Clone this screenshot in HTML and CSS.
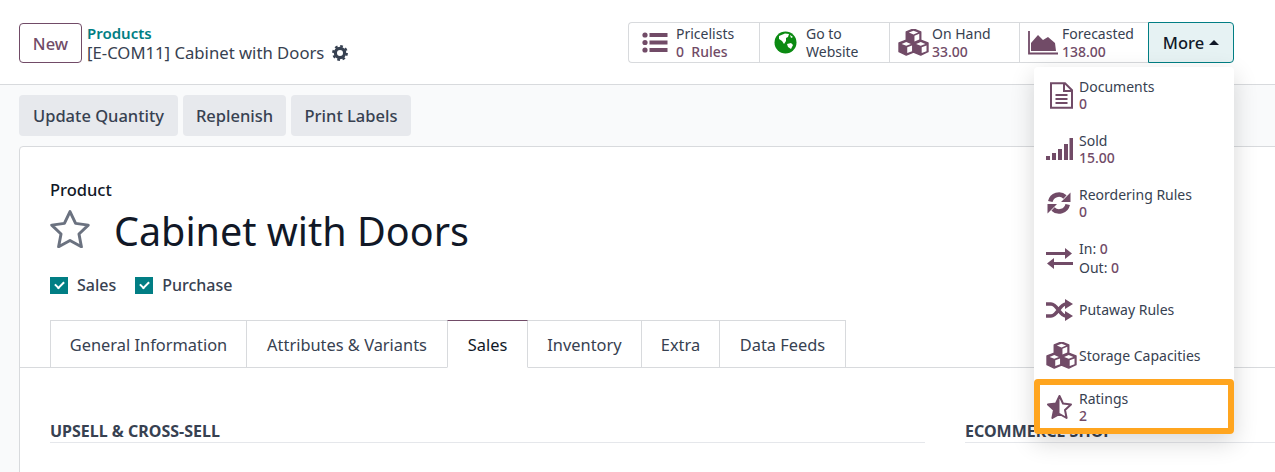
FILE: index.html
```html
<!DOCTYPE html>
<html lang="en">
<head>
    <meta charset="UTF-8">
    <title>Cabinet with Doors</title>
    <link rel="stylesheet" href="styles.css">
</head>
<body>
    <svg class="defs" width="0" height="0">
        <symbol id="cubes" viewBox="0 0 34 28">
            <path d="M17 0l7.500 3v8.500l7.500 3v9L24.500 27 17 24l-7.500 3L2 23.500v-9l7.500-3V3z" fill="#714b67" stroke="#714b67" stroke-width="1.500" stroke-linejoin="round"/>
            <path d="M17 1.800l4.800 1.900L17 5.600l-4.800-1.900zM9.500 13.600l4.800 1.900-4.800 1.900-4.800-1.900zM24.500 13.600l4.800 1.900-4.800 1.900-4.800-1.900z" fill="#fff"/>
            <path d="M18 7l5-2v6l-5 2zM10.500 19l5-2v6l-5 2zM25.500 19l5-2v6l-5 2z" fill="#fff"/>
        </symbol>
    </svg>

    <header class="control-panel">
        <button class="btn-new">New</button>
        <div class="breadcrumb">
            <a class="breadcrumb-link">Products</a>
            <div class="breadcrumb-current">
                <span>[E-COM11] Cabinet with Doors</span>
                <svg class="icon-gear" viewBox="0 0 16 16">
                    <circle cx="8" cy="8" r="4.600" fill="none" stroke="#374151" stroke-width="3.200"/>
                    <circle cx="8" cy="8" r="6.800" fill="none" stroke="#374151" stroke-width="2.200" stroke-dasharray="2.700 2.640"/>
                </svg>
            </div>
        </div>
        <div class="stat-buttons">
            <div class="stat-group">
                <a class="stat stat-pricelists">
                    <svg class="stat-icon" width="26" height="21" viewBox="0 0 26 21">
                        <circle cx="3" cy="3" r="2.600"/><circle cx="3" cy="10.500" r="2.600"/><circle cx="3" cy="18" r="2.600"/>
                        <rect x="7.500" y="1" width="18" height="4"/><rect x="7.500" y="8.500" width="18" height="4"/><rect x="7.500" y="16" width="18" height="4"/>
                    </svg>
                    <span class="stat-text"><span>Pricelists</span><span class="stat-value">0&nbsp; Rules</span></span>
                </a>
                <a class="stat stat-website">
                    <svg class="stat-icon" width="23" height="23" viewBox="0 0 23 23">
                        <circle cx="11.500" cy="11.500" r="11" fill="#0b8a12"/>
                        <path d="M5 5l6-2.500 4 .5-1 3-2 1 0 3-2 3-2-3-3-2zM13 13l4-1 2 2-2 4-3-2zM16 4l3 2-2 1z" fill="#fff"/>
                    </svg>
                    <span class="stat-text"><span>Go to</span><span>Website</span></span>
                </a>
                <a class="stat stat-hand">
                    <svg class="stat-icon" width="33" height="27"><use href="#cubes"/></svg>
                    <span class="stat-text"><span>On Hand</span><span class="stat-value">33.00</span></span>
                </a>
                <a class="stat stat-forecast">
                    <svg class="stat-icon" width="30" height="24" viewBox="0 0 30 24">
                        <path d="M3 17L3 12 10 4l5 5 5-3 7 6 1 8H3z"/>
                        <path d="M1 0v22.500h29" fill="none" stroke="#714b67" stroke-width="1.800"/>
                    </svg>
                    <span class="stat-text"><span>Forecasted</span><span class="stat-value">138.00</span></span>
                </a>
            </div>
            <div class="more-wrap">
                <button class="btn-more">More <span class="caret"></span></button>
                <div class="more-menu">
                    <a class="menu-item">
                        <svg class="stat-icon icon-doc" width="25" height="27" viewBox="0 0 25 27">
                            <path d="M2 1.200h14l7 7v17.600H2z" fill="none" stroke="#714b67" stroke-width="2"/>
                            <path d="M15 1.500v7.500h8M6.500 13h12M6.500 17h12M6.500 21h12" fill="none" stroke="#714b67" stroke-width="2"/>
                        </svg>
                        <span class="stat-text"><span>Documents</span><span class="stat-value">0</span></span>
                    </a>
                    <a class="menu-item">
                        <svg class="stat-icon" width="27" height="23" viewBox="0 0 27 23">
                            <rect x="0" y="18" width="4" height="4"/><rect x="6" y="15" width="4" height="7"/><rect x="12" y="11" width="4" height="11"/><rect x="18" y="6" width="4" height="16"/><rect x="23.500" y="0" width="3.500" height="22"/>
                        </svg>
                        <span class="stat-text"><span>Sold</span><span class="stat-value">15.00</span></span>
                    </a>
                    <a class="menu-item">
                        <svg class="stat-icon icon-refresh" width="24" height="24" viewBox="0 0 24 24">
                            <path d="M3.300 10.500A8.800 8.800 0 0 1 18 6M20.700 13.500A8.800 8.800 0 0 1 6 18" fill="none" stroke="#714b67" stroke-width="4.600"/>
                            <path d="M23.500 1.500v9.500H14zM.5 22.500V13H10z"/>
                        </svg>
                        <span class="stat-text"><span>Reordering Rules</span><span class="stat-value">0</span></span>
                    </a>
                    <a class="menu-item menu-inout">
                        <svg class="stat-icon" width="27" height="21" viewBox="0 0 27 21">
                            <path d="M0 4h19V0l7 5.500-7 5.500V7H0zM27 14H8v-4l-7 5.500L8 21v-4h19z"/>
                        </svg>
                        <span class="stat-text"><span>In: <span class="stat-value">0</span></span><span>Out: <span class="stat-value">0</span></span></span>
                    </a>
                    <a class="menu-item menu-putaway">
                        <svg class="stat-icon" width="27" height="22" viewBox="0 0 27 22">
                            <path d="M0 5h5c6.500 0 8.500 12 15 12M0 17h5c6.500 0 8.500-12 15-12" fill="none" stroke="#714b67" stroke-width="3.600"/>
                            <path d="M19 0l8 5-8 5zM19 12l8 5-8 5z"/>
                        </svg>
                        <span class="stat-text"><span>Putaway Rules</span></span>
                    </a>
                    <a class="menu-item menu-storage">
                        <svg class="stat-icon icon-cubes" width="33" height="27"><use href="#cubes"/></svg>
                        <span class="stat-text"><span>Storage Capacities</span></span>
                    </a>
                    <a class="menu-item menu-highlight">
                        <svg class="stat-icon icon-rating" width="25" height="24" viewBox="0 0 25 24">
                            <path d="M12.500 1l3.500 7.500 8 1-6 5.500 1.600 8-7.100-4-7.100 4 1.600-8-6-5.500 8-1z" fill="none" stroke="#714b67" stroke-width="2" stroke-linejoin="round"/>
                            <path d="M12.500 1v17.500l-7.100 4 1.600-8-6-5.500 8-1z"/>
                        </svg>
                        <span class="stat-text"><span>Ratings</span><span class="stat-value">2</span></span>
                    </a>
                </div>
            </div>
        </div>
    </header>

    <main class="content">
        <div class="action-bar">
            <button class="btn-action btn-update">Update Quantity</button>
            <button class="btn-action btn-replenish">Replenish</button>
            <button class="btn-action btn-print">Print Labels</button>
        </div>
        <section class="sheet">
            <div class="sheet-head">
                <label class="field-label">Product</label>
                <div class="title-row">
                    <svg class="icon-star" width="40" height="38" viewBox="1.500 1 37 36">
                        <path d="M20 2.500l5.300 11.200 12 1.600-8.800 8.400 2.300 12.100L20 29.900 9.200 35.800l2.300-12.100-8.800-8.400 12-1.600z" fill="none" stroke="#6b7280" stroke-width="2.800" stroke-linejoin="round"/>
                    </svg>
                    <h1>Cabinet with Doors</h1>
                </div>
                <div class="checks">
                    <label class="check"><span class="check-box"></span>Sales</label>
                    <label class="check"><span class="check-box"></span>Purchase</label>
                </div>
            </div>
            <nav class="tabs">
                <a class="tab tab-general">General Information</a>
                <a class="tab tab-attrs">Attributes &amp; Variants</a>
                <a class="tab tab-sales active">Sales</a>
                <a class="tab tab-inventory">Inventory</a>
                <a class="tab tab-extra">Extra</a>
                <a class="tab tab-feeds">Data Feeds</a>
            </nav>
            <div class="sections">
                <h2 class="section-title">UPSELL &amp; CROSS-SELL</h2>
                <h2 class="section-title">ECOMMERCE SHOP</h2>
            </div>
        </section>
    </main>
</body>
</html>
```

FILE: styles.css
```css
:root {
    --plum: #714b67;
    --teal: #017e84;
    --text: #374151;
    --dark: #111827;
    --line: #d8dadd;
}

* {
    box-sizing: border-box;
    margin: 0;
    padding: 0;
    font-family: "Noto Sans", "Open Sans", sans-serif;
}

html, body {
    height: 472px;
    overflow: hidden;
}

body {
    background-color: #f9fafb;
    color: var(--text);
    font-size: 14px;
}

.defs {
    display: block;
    height: 0;
}

button {
    border: none;
    cursor: pointer;
}

.control-panel {
    display: flex;
    align-items: flex-start;
    height: 85px;
    padding: 22px 41px 0 19px;
    background: white;
    border-bottom: 1px solid var(--line);
}

.btn-new {
    width: 63px;
    height: 40px;
    margin-top: 1px;
    background: white;
    border: 1px solid var(--plum);
    border-radius: 4px;
    color: var(--plum);
    font-size: 16.500px;
    font-weight: 500;
}

.breadcrumb {
    margin-left: 5px;
    line-height: 20px;
}

.breadcrumb-link {
    display: block;
    margin-top: 1px;
    color: var(--teal);
    font-size: 15px;
    font-weight: 600;
}

.breadcrumb-current {
    display: flex;
    align-items: center;
    gap: 8px;
    font-size: 16.700px;
}

.icon-gear {
    width: 16px;
    height: 16px;
}

.stat-buttons {
    display: flex;
    margin-left: auto;
}

.stat-group {
    display: flex;
    height: 41px;
    border: 1px solid var(--line);
    border-right: none;
    border-radius: 4px 0 0 4px;
    background: white;
}

.stat {
    display: flex;
    align-items: center;
    border-right: 1px solid var(--line);
}

.stat-pricelists { width: 131px; padding-left: 13px; gap: 8px; }
.stat-website { width: 130px; padding-left: 14px; gap: 9px; }
.stat-hand { width: 130px; padding-left: 7px; gap: 2px; }
.stat-forecast { width: 128px; padding-left: 8px; gap: 4px; border-right: none; }

.stat-icon {
    flex-shrink: 0;
    fill: var(--plum);
}

.stat-text {
    display: flex;
    flex-direction: column;
    font-size: 14px;
    line-height: 18px;
}

.stat-value {
    color: var(--plum);
    font-weight: 500;
}

.more-wrap {
    position: relative;
}

.btn-more {
    display: flex;
    align-items: center;
    justify-content: center;
    gap: 5px;
    width: 86px;
    height: 41px;
    background: #e6f2f3;
    border: 1px solid var(--teal);
    border-radius: 0 4px 4px 0;
    color: var(--dark);
    font-size: 16.500px;
    font-weight: 500;
}

.caret {
    border-left: 5px solid transparent;
    border-right: 5px solid transparent;
    border-bottom: 5px solid var(--dark);
}

/* dropdown hangs over the page */
.more-menu {
    position: absolute;
    top: 45px;
    right: 0;
    width: 200px;
    height: 367px;
    padding-top: 1px;
    background: white;
    border-radius: 4px;
    box-shadow: 0 8px 24px rgba(0, 0, 0, 0.16);
    z-index: 2;
}

.menu-item {
    display: grid;
    grid-template-columns: 33px 1fr;
    align-items: center;
    height: 54px;
    padding-left: 12px;
}

.menu-item .stat-text {
    line-height: 17px;
}

.menu-inout {
    height: 56px;
}

.menu-inout .stat-text {
    line-height: 19px;
}

.menu-putaway {
    height: 47px;
}

.menu-storage {
    height: 45px;
}

.icon-doc {
    margin-left: 3px;
}

.icon-refresh {
    margin-left: 1px;
}

.icon-cubes {
    margin-left: -1px;
}

.icon-rating {
    margin-left: 1px;
}

.menu-highlight {
    position: absolute;
    left: 0;
    right: 0;
    bottom: 0;
    height: 55px;
    border: 6px solid #ffa51f;
    border-radius: 4px;
    padding-left: 6px;
}

.content {
    padding: 10px 0 0 19px;
}

.action-bar {
    display: flex;
    gap: 5px;
}

.btn-action {
    height: 41px;
    background: #e7e9ed;
    border-radius: 4px;
    color: var(--text);
    font-size: 16.500px;
    font-weight: 500;
}

.btn-update { width: 159px; }
.btn-replenish { width: 103px; }
.btn-print { width: 120px; }

.sheet {
    width: 1280px;
    height: 340px;
    margin-top: 10px;
    background: white;
    border: 1px solid var(--line);
    border-radius: 4px;
}

.sheet-head {
    padding: 32px 30px 0;
}

.field-label {
    display: block;
    color: var(--dark);
    font-size: 16.500px;
    font-weight: 500;
    line-height: 22px;
}

.title-row {
    display: flex;
    align-items: center;
    gap: 24px;
    height: 50px;
    margin-top: 4px;
}

.icon-star {
    margin-top: -2px;
}

h1 {
    margin-top: 2px;
    color: var(--dark);
    font-size: 39.500px;
    font-weight: 400;
}

.checks {
    display: flex;
    gap: 19px;
    margin-top: 19px;
}

.check {
    display: flex;
    align-items: center;
    gap: 9px;
    font-size: 16px;
    font-weight: 500;
}

.check-box {
    position: relative;
    width: 18px;
    height: 17px;
    background: var(--teal);
}

.check-box::after {
    content: "";
    position: absolute;
    left: 5px;
    top: 4px;
    width: 7px;
    height: 4px;
    border-left: 2px solid white;
    border-bottom: 2px solid white;
    transform: rotate(-45deg);
}

.tabs {
    display: flex;
    height: 48px;
    margin-top: 24px;
    padding-left: 30px;
    border-bottom: 1px solid var(--line);
}

.tab {
    display: flex;
    align-items: center;
    justify-content: center;
    height: 48px;
    border: 1px solid var(--line);
    border-left: none;
    font-size: 16.400px;
}

.tab-general { width: 197px; border-left: 1px solid var(--line); }
.tab-attrs { width: 201px; }
.tab-sales { width: 81px; margin-left: -1px; }
.tab-inventory { width: 114px; }
.tab-extra { width: 78px; }
.tab-feeds { width: 126px; }

.tab.active {
    border-top-color: var(--plum);
    border-bottom-color: white;
    border-left: 1px solid var(--line);
    color: var(--dark);
}

.sections {
    display: grid;
    grid-template-columns: 875px 1fr;
    gap: 40px;
    margin-top: 52px;
    padding-left: 30px;
}

.section-title {
    border-bottom: 1px solid #e5e7eb;
    font-size: 16px;
    font-weight: 700;
    line-height: 22px;
}
```
